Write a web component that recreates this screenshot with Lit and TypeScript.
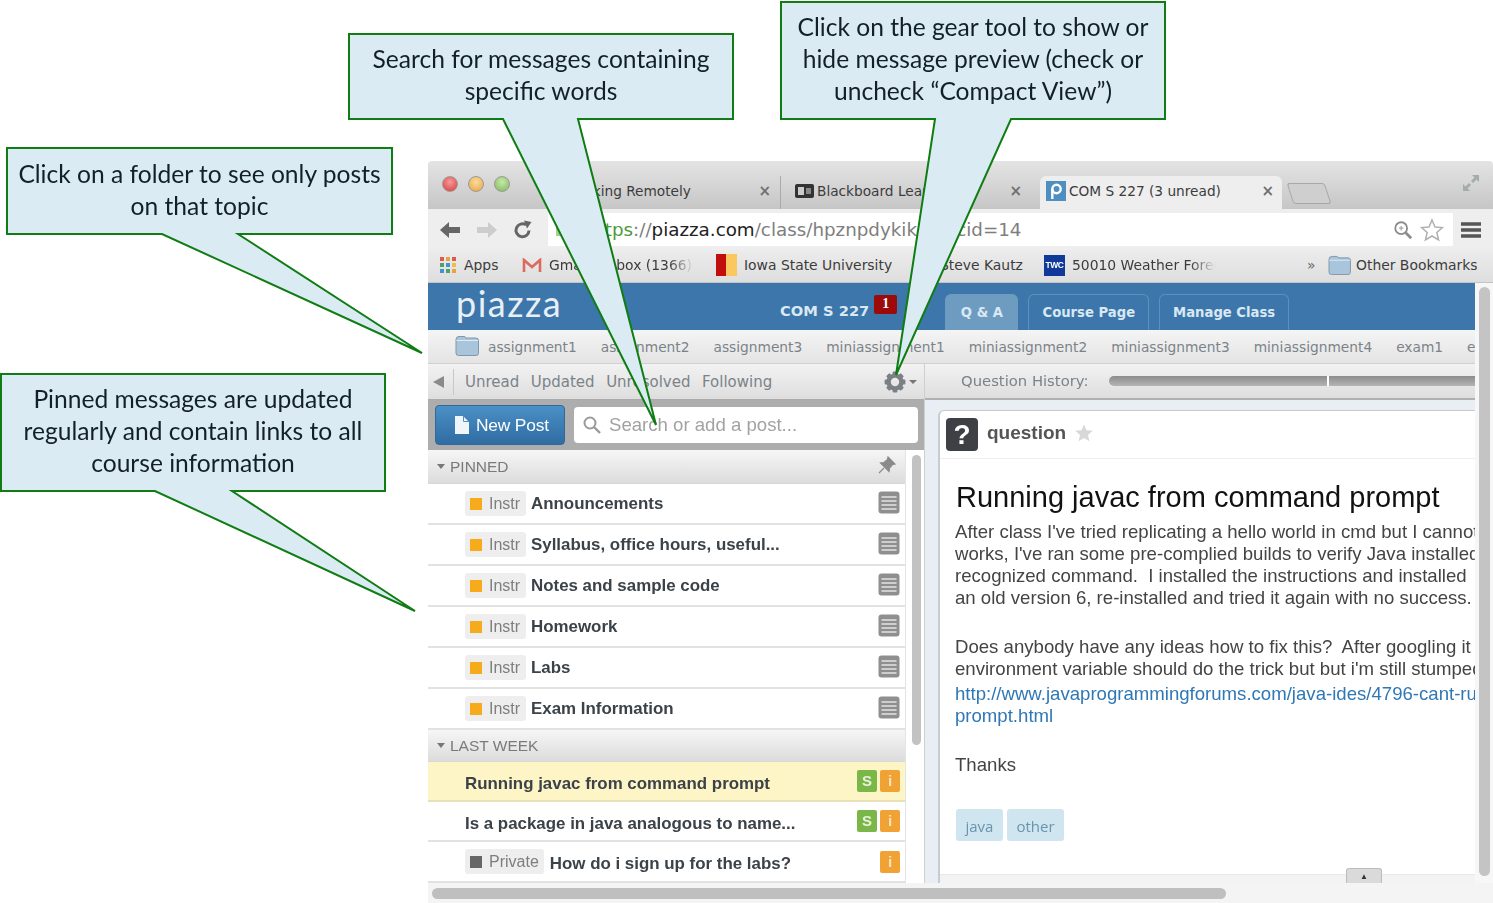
import { LitElement, html, css, svg } from 'lit';
import { customElement } from 'lit/decorators.js';

const uiFont = css`"DejaVu Sans", "Open Sans", sans-serif`;
const pageFont = css`"Liberation Sans", Arial, sans-serif`;

// small icons, all drawn on their own little viewBox
const gear = () => {
  const teeth = [0, 45, 90, 135, 180, 225, 270, 315];
  return html`<svg width="22" height="22" viewBox="0 0 22 22">
    ${teeth.map((a) => svg`<rect x="8.6" y="0.6" width="4.8" height="5" rx="1" fill="#7c8084" transform="rotate(${a} 11 11)"/>`)}
    <circle cx="11" cy="11" r="6.4" fill="none" stroke="#7c8084" stroke-width="4.4"/>
  </svg>`;
};

const folder = (w: number, h: number) => html`<svg width=${w} height=${h} viewBox="0 0 24 21">
  <path d="M1 4.5 Q1 1.5 4 1.5 H9 Q10.5 1.5 11 3 H21 Q23.5 3 23.5 5.5 V18 Q23.5 20.5 21 20.5 H3.5 Q1 20.5 1 18 Z" fill="#a9c5dc" stroke="#8297a8" stroke-width="1"/>
  <path d="M1.5 5.5 H23" stroke="#dcebf5" stroke-width="1"/>
</svg>`;

const notesIcon = html`<svg class="notes" width="22" height="23" viewBox="0 0 22 23">
  <rect x="0.5" y="0.5" width="21" height="22" rx="3" fill="#8f8f8f"/>
  <path d="M3.5 6 H18.5 M3.5 10 H18.5 M3.5 14 H18.5 M3.5 18 H18.5" stroke="#e4e4e4" stroke-width="1.6"/>
</svg>`;

@customElement('browser-chrome')
export class BrowserChrome extends LitElement {
  static styles = css`
    :host { display: block; font-family: ${uiFont}; color: #3c3c3c; }
    .tabs {
      height: 48px;
      display: flex;
      align-items: flex-end;
      background: linear-gradient(#e4e4e4, #c6c6c6);
      position: relative;
    }
    .lights { display: flex; gap: 10px; align-self: center; margin: 0 0 2px 14px; }
    .light { width: 16px; height: 16px; border-radius: 50%; border: 1px solid #9a9a9a; box-sizing: border-box; }
    .red { background: radial-gradient(circle at 50% 35%, #f59a9a, #dc3b3b); }
    .amber { background: radial-gradient(circle at 50% 35%, #fbdca0, #e8a23a); }
    .green { background: radial-gradient(circle at 50% 35%, #c8e8a8, #7cb85a); }
    .tab {
      height: 33px;
      display: flex;
      align-items: center;
      font-size: 13.7px;
      box-sizing: border-box;
      border-radius: 6px 6px 0 0;
      white-space: nowrap;
      overflow: hidden;
      padding-bottom: 3px;
    }
    .tab .close { margin-left: auto; color: #707070; font-size: 15px; font-weight: bold; flex: none; }
    .t1 { width: 239px; margin-left: 28px; padding-left: 28px; padding-right: 6px; }
    .t2 { width: 248px; margin-left: 3px; padding-left: 14px; padding-right: 6px; border-left: 1px solid #aaa; border-radius: 0; }
    .t3 { width: 242px; margin-left: 12px; padding-left: 6px; padding-right: 8px; background: #eeeeee; }
    .t2 .label { width: 110px; overflow: hidden; }
    .fav { flex: none; margin-right: 3px; }
    .newtab { width: 36px; height: 19px; margin: 0 0 5px 8px; border: 1px solid #a8a8a8; border-radius: 3px; transform: skewX(18deg); background: #cfcfcf; }
    .expand { position: absolute; right: 12px; top: 12px; }
    .toolbar {
      height: 41px;
      display: flex;
      align-items: center;
      background: #eeeeee;
    }
    .nav { flex: none; margin-left: 11px; }
    .nav + .nav { margin-left: 15px; }
    .url {
      margin-left: 15px;
      width: 905px;
      height: 33px;
      box-sizing: border-box;
      background: #fff;
      display: flex;
      align-items: center;
      padding-left: 8px;
      font-size: 18.3px;
      color: #7e7e7e;
    }
    .lock { width: 13px; height: 13px; background: #a6d284; margin-right: 17px; flex: none; }
    .address { white-space: nowrap; }
    .https { color: #4d9a3c; }
    .host { color: #222; }
    .url-tools { margin-left: auto; display: flex; align-items: center; gap: 7px; padding-right: 9px; }
    .menu { margin-left: 8px; flex: none; }
    .bookmarks {
      height: 33px;
      display: flex;
      align-items: center;
      background: linear-gradient(#ececec, #dedede);
      font-size: 13.9px;
      white-space: nowrap;
      border-bottom: 1px solid #c4c4c4;
      box-sizing: border-box;
      padding-bottom: 2px;
    }
    .bm { display: flex; align-items: center; gap: 7px; flex: none; overflow: hidden; }
    .bm svg { flex: none; }
    .fade { -webkit-mask-image: linear-gradient(90deg, #000 85%, transparent); mask-image: linear-gradient(90deg, #000 85%, transparent); }
    .apps { margin-left: 11px; width: 62px; }
    .gmail { margin-left: 21px; width: 172px; gap: 7px; }
    .iowa { margin-left: 22px; width: 176px; }
    .steve { margin-left: 48px; width: 84px; }
    .twc { margin-left: 20px; width: 172px; }
    .more { margin-left: 91px; width: 21px; color: #666; }
    .other { margin-left: 0; gap: 5px; }
    .twc-logo { width: 21px; height: 21px; background: #10399a; color: #fff; font: bold 8.5px/21px ${pageFont}; text-align: center; letter-spacing: -0.5px; flex: none; }
  `;

  render() {
    return html`
      <div class="tabs">
        <div class="lights"><span class="light red"></span><span class="light amber"></span><span class="light green"></span></div>
        <div class="tab t1"><span>Working Remotely</span><span class="close">×</span></div>
        <div class="tab t2">
          <svg class="fav" width="19" height="14" viewBox="0 0 19 14"><rect width="19" height="14" rx="2" fill="#333"/><rect x="3" y="3" width="6" height="8" fill="#ccc"/><rect x="11" y="4" width="5" height="6" fill="#888"/></svg>
          <span class="label">Blackboard Learn</span><span class="close">×</span>
        </div>
        <div class="tab t3">
          <svg class="fav" width="20" height="20" viewBox="0 0 20 20"><rect width="20" height="20" fill="#4d8fc0"/><circle cx="10.5" cy="8" r="4.2" fill="none" stroke="#fff" stroke-width="2.4"/><path d="M6.3 8 V18" stroke="#fff" stroke-width="2.4"/></svg>
          <span>COM S 227 (3 unread)</span><span class="close">×</span>
        </div>
        <div class="newtab"></div>
        <svg class="expand" width="20" height="20" viewBox="0 0 20 20"><path d="M11 2 H18 V9 L15.5 6.5 L12 10 L10 8 L13.5 4.5 Z M9 18 H2 V11 L4.5 13.5 L8 10 L10 12 L6.5 15.5 Z" fill="#a6abab"/></svg>
      </div>
      <div class="toolbar">
        <svg class="nav" width="22" height="20" viewBox="0 0 22 20"><path d="M1 10 L10 2 V7 H21 V13 H10 V18 Z" fill="#666"/></svg>
        <svg class="nav" width="22" height="20" viewBox="0 0 22 20"><path d="M21 10 L12 2 V7 H1 V13 H12 V18 Z" fill="#cdcdcd"/></svg>
        <svg class="nav" width="20" height="20" viewBox="0 0 20 20"><path d="M16 10.5 A6.5 6.5 0 1 1 13 4.8" fill="none" stroke="#666" stroke-width="3"/><path d="M11 0.5 L18.5 2 L14 8.5 Z" fill="#666"/></svg>
        <div class="url">
          <span class="lock"></span>
          <span class="address"><span class="https">https</span>://<span class="host">piazza.com</span>/class/hpznpdykik3m?cid=14</span>
          <div class="url-tools">
            <svg width="20" height="20" viewBox="0 0 22 22"><circle cx="9" cy="9" r="6.5" fill="none" stroke="#8c8c8c" stroke-width="2"/><path d="M14 14 L20 20" stroke="#8c8c8c" stroke-width="3"/><path d="M6.5 9 H11.5 M9 6.5 V11.5" stroke="#a8a8a8" stroke-width="1.4"/></svg>
            <svg width="24" height="24" viewBox="0 0 24 24"><path d="M12 2 L15 9 L22.5 9.6 L16.8 14.5 L18.6 22 L12 18 L5.4 22 L7.2 14.5 L1.5 9.6 L9 9 Z" fill="#fff" stroke="#b0b0b0" stroke-width="1.5"/></svg>
          </div>
        </div>
        <svg class="menu" width="20" height="18" viewBox="0 0 20 18"><path d="M0 3 H20 M0 9 H20 M0 15 H20" stroke="#555" stroke-width="3.6"/></svg>
      </div>
      <div class="bookmarks">
        <div class="bm apps">
          <svg width="18" height="18" viewBox="0 0 18 18">
            ${[1, 7, 13].flatMap((y, r) => [1, 7, 13].map((x, c) => svg`<rect x=${x} y=${y} width="4" height="4" fill=${['#e0584c', '#e8a33c', '#e0584c', '#4aa564', '#4a90d0', '#e8c23c', '#4a90d0', '#4aa564', '#e8a33c'][r * 3 + c]}/>`))}
          </svg>
          <span>Apps</span>
        </div>
        <div class="bm gmail fade">
          <svg width="20" height="15" viewBox="0 0 20 15"><path d="M2 14 V2 L10 9 L18 2 V14" fill="none" stroke="#dd6a5c" stroke-width="2.6"/></svg>
          <span>Gmail - Inbox (1366)</span>
        </div>
        <div class="bm iowa">
          <svg width="21" height="22" viewBox="0 0 21 22"><rect width="10" height="22" fill="#c20d0d"/><rect x="10" width="11" height="22" fill="#fbc860"/></svg>
          <span>Iowa State University</span>
        </div>
        <div class="bm steve"><span>Steve Kautz</span></div>
        <div class="bm twc fade"><span class="twc-logo">TWC</span><span>50010 Weather Forecast</span></div>
        <div class="bm more">»</div>
        <div class="bm other">${folder(23, 20)}<span>Other Bookmarks</span></div>
      </div>
    `;
  }
}

const folders = ['assignment1', 'assignment2', 'assignment3', 'miniassignment1', 'miniassignment2', 'miniassignment3', 'miniassignment4', 'exam1', 'exam2'];
const pinned = ['Announcements', 'Syllabus, office hours, useful...', 'Notes and sample code', 'Homework', 'Labs', 'Exam Information'];

@customElement('piazza-page')
export class PiazzaPage extends LitElement {
  static styles = css`
    :host { display: flex; flex-direction: column; width: 1047px; height: 600px; overflow: hidden; font-family: ${pageFont}; }
    .header { height: 47px; flex: none; display: flex; align-items: flex-end; background: #3c76aa; color: #d9e8f3; font-family: ${uiFont}; }
    .logo { font: 400 36px/41px Lato, sans-serif; letter-spacing: 1.5px; color: #e8eff5; margin-left: 28px; align-self: flex-start; width: 324px; height: 47px; }
    .course { font-weight: bold; font-size: 14.7px; align-self: center; margin-top: 8px; }
    .count { align-self: flex-start; margin: 12px 0 0 5px; width: 23px; height: 19px; background: #9c0a0a; border-radius: 2px; color: #fff; font: bold 14px/18px "Liberation Serif", serif; text-align: center; }
    .nav-tabs { display: flex; gap: 10px; margin-left: 48px; }
    .nav-tab { height: 36px; box-sizing: border-box; border: 1px solid #5d90bb; border-bottom: 0; border-radius: 6px 6px 0 0; padding: 0 13px; font: bold 13.2px/36px ${uiFont}; }
    .nav-tab.on { background: #6e9cc1; border-color: #6e9cc1; padding: 0 14.5px; }
    .folders { height: 34px; flex: none; display: flex; align-items: center; gap: 24px; overflow: hidden; background: linear-gradient(#f4f4f4, #e4e4e4); border-bottom: 1px solid #d0d0d0; box-sizing: border-box; font: 13.75px ${uiFont}; color: #7b8389; white-space: nowrap; padding-left: 60px; }
    .folder-icon { flex: none; margin: 0 -15px 0 -33px; }
    .main { flex: 1; min-height: 0; display: flex; }
    .left { width: 497px; flex: none; display: flex; flex-direction: column; border-right: 1px solid #cfcfcf; box-sizing: border-box; }
    .filters { height: 36px; flex: none; display: flex; align-items: center; background: linear-gradient(#f2f2f2, #dedede); font: 15px ${uiFont}; color: #7b8389; border-bottom: 1px solid #aaa; box-sizing: border-box; }
    .collapse { width: 0; height: 0; margin-left: 5px; border: 6px solid transparent; border-left: 0; border-right: 11px solid #8a8a8a; }
    .sep { width: 1px; height: 26px; background: #c8c8c8; margin: 0 11px 0 9px; }
    .filter-list { display: flex; gap: 11.5px; flex: 1; }
    .gear { display: flex; align-items: center; gap: 3px; margin-right: 7px; }
    .caret { width: 0; height: 0; border: 4px solid transparent; border-bottom: 0; border-top: 4px solid #777; }
    .search { height: 50px; flex: none; display: flex; align-items: center; gap: 9px; padding: 0 6px 0 7px; background: #adadad; box-sizing: border-box; }
    .new-post { width: 130px; height: 40px; flex: none; border: 1px solid #2f6a9c; box-sizing: border-box; border-radius: 4px; background: linear-gradient(#4b90c6, #2f6ca2); color: #fff; font-size: 17.4px; display: flex; align-items: center; gap: 7px; padding-left: 19px; letter-spacing: -0.2px; }
    .input { flex: 1; height: 36px; background: #fff; border-radius: 4px; display: flex; align-items: center; gap: 8px; padding-left: 9px; color: #a2a2a2; font-size: 18.6px; }
    .list { flex: 1; min-height: 0; display: flex; }
    .rows { width: 477px; flex: none; }
    .scroll-track { flex: 1; background: #fff; border-left: 1px solid #e4e4e4; padding: 5px 3px 0 6px; box-sizing: border-box; }
    .scroll-thumb { height: 290px; background: #c2c2c2; border-radius: 5px; }
    .group { display: flex; align-items: center; gap: 5px; background: linear-gradient(#f6f6f6, #dcdcdc); color: #7a7a7a; font-size: 15.5px; padding-left: 9px; box-sizing: border-box; border-bottom: 1px solid #d8d8d8; }
    .group.first { height: 34px; }
    .group.second { height: 32px; }
    .group .pin { margin-left: auto; margin-right: 9px; margin-top: -3px; }
    .arrow { width: 0; height: 0; border: 4px solid transparent; border-bottom: 0; border-top: 5px solid #777; }
    .row { display: flex; align-items: center; padding-left: 37px; height: 41px; box-sizing: border-box; border-bottom: 2px solid #e2e2e2; font-weight: bold; font-size: 16.9px; color: #3b4248; white-space: nowrap; }
    .row .title { padding-top: 1px; }
    .row.low { height: 40px; }
    .row.low .title { padding-top: 5px; }
    .row.last .title { padding-top: 4px; }
    .row.sel { background: #fdf5c6; border-bottom-color: #e8e0b8; }
    .chip { display: flex; align-items: center; height: 25px; width: 61px; box-sizing: border-box; padding: 0 5px; margin-right: 5px; background: #eeeeee; border-radius: 3px; font-weight: normal; font-size: 16px; color: #7e7e7e; gap: 7px; }
    .chip.wide { width: auto; margin-right: 6px; }
    .mark { width: 12px; height: 12px; background: #f6ab1c; }
    .mark.dark { background: #666; }
    .tail { margin-left: auto; margin-right: 5px; display: flex; gap: 3px; }
    .notes { margin-top: -3px; }
    .badge { width: 20px; height: 22px; border-radius: 2px; color: #e8f3dc; text-align: center; font-size: 15px; line-height: 22px; }
    .badge.s { background: #7ab648; }
    .badge.i { background: #f0a234; color: #fbe3c0; }
    .right { flex: 1; min-width: 0; display: flex; flex-direction: column; background: #e8eef3; }
    .history { height: 36px; flex: none; display: flex; align-items: center; gap: 21px; padding: 0 0 2px 36px; background: linear-gradient(#f2f2f2, #dedede); border-bottom: 2px solid #b0b0b0; box-sizing: border-box; font: 14.8px ${uiFont}; color: #7b8389; white-space: nowrap; }
    .track { flex: 1; height: 10px; border-radius: 5px 0 0 5px; background: linear-gradient(90deg, transparent 218px, #fff 218px, #fff 220px, transparent 220px), linear-gradient(#8c8c8c, #b4b4b4); margin-top: 2px; }
    .card { flex: 1; min-height: 0; margin: 10px 0 0 13px; background: #fff; border-left: 2px solid #c8ccd2; border-top: 1px solid #c9c9c9; border-top-left-radius: 6px; display: flex; flex-direction: column; overflow: hidden; }
    .q-head { height: 47px; flex: none; display: flex; align-items: center; gap: 9px; padding-left: 6px; border-bottom: 1px solid #eeeeee; font-weight: bold; font-size: 19px; color: #555; }
    .q-head .word { margin-top: -4px; }
    .q-head svg { margin-top: -4px; }
    .q-mark { width: 32px; height: 33px; background: #3d4044; border-radius: 4px; color: #fff; font-size: 28px; line-height: 33px; text-align: center; }
    .q-body { flex: 1; min-height: 0; padding: 21px 0 0 15px; color: #444; font-size: 18.6px; line-height: 22px; }
    .line { white-space: pre; }
    h1 { margin: 0 0 7px 1px; font-weight: normal; font-size: 29px; line-height: 34px; color: #111; white-space: nowrap; }
    p { margin: 0 0 27px; }
    a { color: #2f78b5; text-decoration: none; display: block; }
    .link { margin-top: 3px; }
    .tags { display: flex; gap: 4px; margin-top: 33px; margin-left: 1px; }
    .tag { height: 32px; padding: 0 9.5px; background: #cfe5f0; border-radius: 3px; color: #6b94ad; font: 15px/34px "Open Sans", ${uiFont}; }
    .foot { height: 8px; flex: none; display: flex; justify-content: flex-end; background: #f3f3f3; border-top: 1px solid #e8e8e8; padding-right: 93px; }
    .up { width: 36px; height: 15px; margin-top: -7px; background: #dadada; border: 1px solid #bbb; border-bottom: 0; border-radius: 3px 3px 0 0; box-sizing: border-box; color: #333; font-size: 8px; line-height: 15px; text-align: center; }
  `;

  private row(title: string, chip: unknown, tail: unknown, cls = '') {
    return html`<div class="row ${cls}">${chip}<span class="title">${title}</span><div class="tail">${tail}</div></div>`;
  }

  private lines(text: string[]) {
    return text.map((l) => html`<div class="line">${l}</div>`);
  }

  render() {
    const instr = html`<span class="chip"><span class="mark"></span>Instr</span>`;
    const priv = html`<span class="chip wide"><span class="mark dark"></span>Private</span>`;
    const s = html`<span class="badge s">S</span>`;
    const i = html`<span class="badge i">i</span>`;
    return html`
      <div class="header">
        <div class="logo">piazza</div>
        <span class="course">COM S 227</span>
        <span class="count">1</span>
        <div class="nav-tabs">
          <div class="nav-tab on">Q &amp; A</div>
          <div class="nav-tab">Course Page</div>
          <div class="nav-tab">Manage Class</div>
        </div>
      </div>
      <div class="folders">
        <span class="folder-icon">${folder(24, 21)}</span>
        ${folders.map((f) => html`<span>${f}</span>`)}
      </div>
      <div class="main">
        <div class="left">
          <div class="filters">
            <span class="collapse"></span><span class="sep"></span>
            <div class="filter-list"><span>Unread</span><span>Updated</span><span>Unresolved</span><span>Following</span></div>
            <div class="gear">${gear()}<span class="caret"></span></div>
          </div>
          <div class="search">
            <div class="new-post">
              <svg width="14" height="18" viewBox="0 0 14 18"><path d="M0 0 H8 L14 6 V18 H0 Z" fill="#f0f5f9"/><path d="M8.5 0 V5.5 H14" fill="none" stroke="#4b90c6"/></svg>
              New Post
            </div>
            <div class="input">
              <svg width="18" height="18" viewBox="0 0 18 18"><circle cx="7" cy="7" r="5.5" fill="none" stroke="#9a9a9a" stroke-width="2"/><path d="M11 11 L17 17" stroke="#9a9a9a" stroke-width="2.4"/></svg>
              Search or add a post...
            </div>
          </div>
          <div class="list">
            <div class="rows">
              <div class="group first"><span class="arrow"></span>PINNED
                <svg class="pin" width="18" height="18" viewBox="0 0 18 18"><path d="M10 1 L17 8 L14.5 8.5 L11.5 12 L11 15.5 L2.5 7 L6 6.5 L9.5 3.5 Z M6 12 L1 17" fill="#8a8a8a" stroke="#8a8a8a" stroke-width="1.2"/></svg>
              </div>
              ${pinned.map((t) => this.row(t, instr, notesIcon))}
              <div class="group second"><span class="arrow"></span>LAST WEEK</div>
              ${this.row('Running javac from command prompt', '', html`${s}${i}`, 'sel low')}
              ${this.row('Is a package in java analogous to name...', '', html`${s}${i}`, 'low')}
              ${this.row('How do i sign up for the labs?', priv, i, 'last')}
            </div>
            <div class="scroll-track"><div class="scroll-thumb"></div></div>
          </div>
        </div>
        <div class="right">
          <div class="history"><span>Question History:</span><div class="track"></div></div>
          <div class="card">
            <div class="q-head">
              <span class="q-mark">?</span><span class="word">question</span>
              <svg width="18" height="18" viewBox="0 0 18 18"><path d="M9 0.5 L11.5 6.3 L17.7 6.8 L13 11 L14.4 17.2 L9 13.9 L3.6 17.2 L5 11 L0.3 6.8 L6.5 6.3 Z" fill="#d8d8d8"/></svg>
            </div>
            <div class="q-body">
              <h1>Running javac from command prompt</h1>
              <p>${this.lines([
                "After class I've tried replicating a hello world in cmd but I cannot",
                "works, I've ran some pre-complied builds to verify Java installed",
                'recognized command.  I installed the instructions and installed',
                'an old version 6, re-installed and tried it again with no success.',
              ])}</p>
              <p>${this.lines([
                'Does anybody have any ideas how to fix this?  After googling it',
                "environment variable should do the trick but but i'm still stumped",
              ])}
                <a class="link" href="#">${this.lines(['http://www.javaprogrammingforums.com/java-ides/4796-cant-run', 'prompt.html'])}</a>
              </p>
              <p>Thanks</p>
              <div class="tags"><span class="tag">java</span><span class="tag">other</span></div>
            </div>
            <div class="foot"><span class="up">▲</span></div>
          </div>
        </div>
      </div>
    `;
  }
}

// the green speech bubbles laid over the screenshot
const callouts = [
  { x: 7, y: 148, w: 385, h: 86, tail: [162, 238], tip: [422, 353], lines: ['Click on a folder to see only posts', 'on that topic'] },
  { x: 349, y: 34, w: 384, h: 85, tail: [503, 578], tip: [656, 425], lines: ['Search for messages containing', 'specific words'] },
  { x: 781, y: 2, w: 384, h: 117, tail: [935, 1011], tip: [896, 375], lines: ['Click on the gear tool to show or', 'hide message preview (check or', 'uncheck “Compact View”)'] },
  { x: 1, y: 374, w: 384, h: 117, tail: [155, 232], tip: [415, 611], lines: ['Pinned messages are updated', 'regularly and contain links to all', 'course information'] },
];

@customElement('app-root')
export class AppRoot extends LitElement {
  static styles = css`
    :host { display: block; position: relative; width: 1493px; height: 903px; background: #fff; overflow: hidden; }
    .window { position: absolute; left: 428px; top: 161px; width: 1065px; height: 742px; border-radius: 4px 4px 0 0; overflow: hidden; display: flex; flex-direction: column; background: #fff; filter: blur(0.35px); }
    .viewport { display: flex; height: 600px; flex: none; }
    .vscroll { flex: 1; background: #f7f7f7; padding: 4px 3px 0 4px; }
    .vthumb { height: 589px; background: #c4c4c4; border-radius: 6px; }
    .hscroll { flex: 1; background: #f4f4f4; padding: 5px 0 0 4px; }
    .hthumb { width: 794px; height: 11px; background: #bfbfbf; border-radius: 6px; }
    .shapes { position: absolute; inset: 0; }
    .bubble { fill: #dbebf3; stroke: #0f7d13; stroke-width: 2; }
    .note { position: absolute; box-sizing: border-box; display: flex; flex-direction: column; align-items: center; justify-content: center; padding-bottom: 3px; font: 24.6px/32px Lato, sans-serif; color: #13202a; white-space: nowrap; }
  `;

  render() {
    return html`
      <div class="window">
        <browser-chrome></browser-chrome>
        <div class="viewport">
          <piazza-page></piazza-page>
          <div class="vscroll"><div class="vthumb"></div></div>
        </div>
        <div class="hscroll"><div class="hthumb"></div></div>
      </div>
      <svg class="shapes" width="1493" height="903" viewBox="0 0 1493 903">
        ${callouts.map((c) => {
          const b = c.y + c.h;
          const pts = `${c.x},${c.y} ${c.x + c.w},${c.y} ${c.x + c.w},${b} ${c.tail[1]},${b} ${c.tip[0]},${c.tip[1]} ${c.tail[0]},${b} ${c.x},${b}`;
          return svg`<polygon class="bubble" points=${pts}></polygon>`;
        })}
      </svg>
      ${callouts.map((c) => html`<div class="note" style="left:${c.x}px;top:${c.y}px;width:${c.w}px;height:${c.h}px">${c.lines.map((l) => html`<span>${l}</span>`)}</div>`)}
    `;
  }
}
